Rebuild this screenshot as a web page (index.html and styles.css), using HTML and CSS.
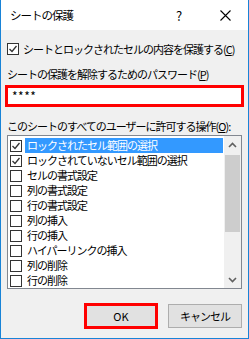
FILE: index.html
```html
<!DOCTYPE html>
<html lang="ja">
<head>
    <meta charset="UTF-8">
    <title>シートの保護</title>
    <link rel="stylesheet" href="styles.css">
</head>
<body>

<div class="dialog">
    <div class="titlebar">
        <span class="title">シートの保護</span>
        <span class="title-btn help">?</span>
        <span class="title-btn close">
            <svg width="11" height="11" viewBox="0 0 11 11"><path d="M0.5 0.5 L10.5 10.5 M10.5 0.5 L0.5 10.5" stroke="#000" stroke-width="1.1" fill="none"/></svg>
        </span>
    </div>

    <div class="content">
        <div class="check-row">
            <span class="box checked">
                <svg width="10" height="10" viewBox="0 0 10 10"><path d="M1.5 5 L4 7.5 L8.5 2" stroke="#333" stroke-width="1.3" fill="none"/></svg>
            </span>
            <span>シートとロックされたセルの内容を保護する(<u>C</u>)</span>
        </div>

        <div class="label">シートの保護を解除するためのパスワード(<u>P</u>)</div>
        <div class="password">****</div>

        <div class="label">このシートのすべてのユーザーに許可する操作(<u>O</u>):</div>

        <div class="list">
            <ul class="items">
                <li><span class="box checked"><svg width="10" height="10" viewBox="0 0 10 10"><path d="M1.5 5 L4 7.5 L8.5 2" stroke="#333" stroke-width="1.3" fill="none"/></svg></span><span class="text selected">ロックされたセル範囲の選択</span></li>
                <li><span class="box checked"><svg width="10" height="10" viewBox="0 0 10 10"><path d="M1.5 5 L4 7.5 L8.5 2" stroke="#333" stroke-width="1.3" fill="none"/></svg></span><span class="text">ロックされていないセル範囲の選択</span></li>
                <li><span class="box"></span><span class="text">セルの書式設定</span></li>
                <li><span class="box"></span><span class="text">列の書式設定</span></li>
                <li><span class="box"></span><span class="text">行の書式設定</span></li>
                <li><span class="box"></span><span class="text">列の挿入</span></li>
                <li><span class="box"></span><span class="text">行の挿入</span></li>
                <li><span class="box"></span><span class="text">ハイパーリンクの挿入</span></li>
                <li><span class="box"></span><span class="text">列の削除</span></li>
                <li><span class="box"></span><span class="text">行の削除</span></li>
            </ul>
            <div class="scrollbar">
                <div class="arrow">
                    <svg width="9" height="6" viewBox="0 0 9 6"><path d="M1 5 L4.5 1.5 L8 5" stroke="#606060" stroke-width="1.6" fill="none"/></svg>
                </div>
                <div class="track">
                    <div class="thumb"></div>
                </div>
                <div class="arrow">
                    <svg width="9" height="6" viewBox="0 0 9 6"><path d="M1 1 L4.5 4.5 L8 1" stroke="#606060" stroke-width="1.6" fill="none"/></svg>
                </div>
            </div>
        </div>

        <div class="buttons">
            <button class="btn ok">OK</button>
            <button class="btn">キャンセル</button>
        </div>
    </div>
</div>

</body>
</html>
```

FILE: styles.css
```css
body {
    margin: 0;
    font-family: "Noto Sans CJK JP", "Noto Sans", sans-serif;
    font-size: 11px;
    letter-spacing: -1px;
    color: #000;
}

.dialog {
    width: 249px;
    height: 339px;
    box-sizing: border-box;
    border: 1px solid #1883d7;
    border-top: none;
    background-color: #f0f0f0;
    display: flex;
    flex-direction: column;
}

.titlebar {
    height: 30px;
    background-color: #fff;
    display: flex;
    align-items: center;
}

.title {
    padding-left: 9px;
    font-size: 11.5px;
    flex: 1;
}

.title-btn {
    width: 46px;
    height: 30px;
    display: flex;
    align-items: center;
    justify-content: center;
}

.help {
    font-size: 13px;
    letter-spacing: 0;
}

.content {
    padding: 0 6px;
    display: flex;
    flex-direction: column;
}

.check-row {
    margin-top: 11px;
    height: 15px;
    display: flex;
    align-items: center;
    gap: 4px;
}

.box {
    width: 12px;
    height: 12px;
    box-sizing: border-box;
    border: 1px solid #333;
    background-color: #fff;
    display: flex;
    align-items: center;
    justify-content: center;
    flex-shrink: 0;
}

u {
    text-decoration-thickness: 1px;
    text-underline-offset: 1px;
}

.label {
    height: 15px;
    line-height: 15px;
}

.check-row + .label {
    margin-top: 11px;
}

.password {
    margin: 3px -2px 0;
    height: 22px;
    box-sizing: border-box;
    border: 3px solid #ff0000;
    background-color: #fff;
    padding-left: 4px;
    font-size: 12px;
    letter-spacing: 0.5px;
    line-height: 16px;
}

.password + .label {
    margin-top: 12px;
}

.list {
    margin-top: 1px;
    height: 154px;
    box-sizing: border-box;
    border: 1px solid #828790;
    background-color: #fff;
    display: flex;
}

.items {
    list-style: none;
    margin: 0;
    padding: 2px 1px 0 2px;
    flex: 1;
}

.items li {
    height: 15px;
    display: flex;
    align-items: center;
    gap: 3px;
}

.items .text {
    flex: 1;
    height: 15px;
    line-height: 15px;
    padding-left: 2px;
}

.items .selected {
    background-color: #3399ff;
    color: #fff;
}

.scrollbar {
    width: 17px;
    display: flex;
    flex-direction: column;
    background-color: #f0f0f0;
}

.arrow {
    height: 17px;
    display: flex;
    align-items: center;
    justify-content: center;
}

.track {
    flex: 1;
    padding: 2px 1px 0;
}

.thumb {
    height: 77px;
    background-color: #cdcdcd;
}

.buttons {
    margin-top: 14px;
    display: flex;
    justify-content: flex-end;
    align-items: center;
    gap: 10px;
}

.btn {
    width: 74px;
    height: 24px;
    box-sizing: border-box;
    border: 1px solid #adadad;
    background-color: #e1e1e1;
    font-family: "Noto Sans CJK JP", "Noto Sans", sans-serif;
    font-size: 11px;
    letter-spacing: -1px;
    padding: 0;
    color: #000;
}

.btn.ok {
    height: 26px;
    border: 3px solid #ff0000;
    letter-spacing: 0;
}
```
